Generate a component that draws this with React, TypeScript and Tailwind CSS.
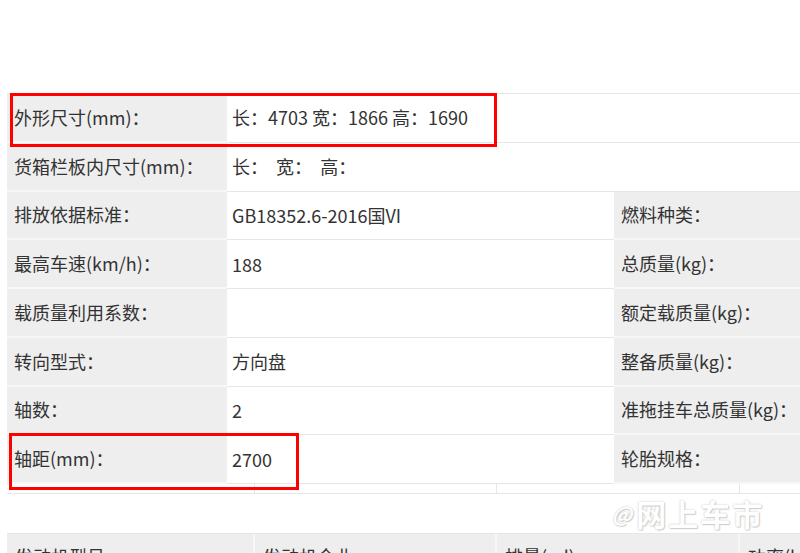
import React from 'react';

const font = { fontFamily: '"Noto Sans CJK SC", "Noto Sans", sans-serif' };

type Row = { label: string; value: string; label2?: string };

const rows: Row[] = [
  { label: '外形尺寸(mm)：', value: '长：4703 宽：1866 高：1690' },
  { label: '货箱栏板内尺寸(mm)：', value: '长：  宽：  高：' },
  { label: '排放依据标准：', value: 'GB18352.6-2016国VI', label2: '燃料种类：' },
  { label: '最高车速(km/h)：', value: '188', label2: '总质量(kg)：' },
  { label: '载质量利用系数：', value: '', label2: '额定载质量(kg)：' },
  { label: '转向型式：', value: '方向盘', label2: '整备质量(kg)：' },
  { label: '轴数：', value: '2', label2: '准拖挂车总质量(kg)：' },
  { label: '轴距(mm)：', value: '2700', label2: '轮胎规格：' },
];

const SpecRow = ({ row }: { row: Row }) => {
  return (
    <div className="flex h-[48.75px]">
      <div className="w-[220px] shrink-0 flex items-center pl-[7px] bg-[#eeeeee] border-b-2 border-[#f7f7f7] whitespace-nowrap">
        {row.label}
      </div>
      {row.label2 !== undefined ? (
        <>
          <div className="w-[387px] shrink-0 flex items-center pl-[5px] bg-white border-b border-[#e6e6e6] whitespace-pre">
            {row.value}
          </div>
          <div className="flex-1 flex items-center pl-[7px] bg-[#eeeeee] border-b-2 border-[#f7f7f7] whitespace-nowrap">
            {row.label2}
          </div>
        </>
      ) : (
        <div className="flex-1 flex items-center pl-[5px] bg-white border-b border-[#e6e6e6] whitespace-pre">
          {row.value}
        </div>
      )}
    </div>
  );
};

const App = () => {
  return (
    <div className="relative w-[800px] h-[553px] overflow-hidden bg-white text-[18px] text-[#333333]" style={font}>
      <div className="pt-[93px] pl-[7px]">
        <div className="border-t border-[#e6e6e6]">
          {rows.map((r) => (
            <SpecRow key={r.label} row={r} />
          ))}
        </div>

        {/* thin empty row under the table */}
        <div className="flex h-[10px] border-b border-[#e6e6e6]">
          <div className="w-[248px] shrink-0 border-r border-[#e6e6e6]" />
          <div className="w-[242px] shrink-0 border-r border-[#e6e6e6]" />
          <div className="w-[243px] shrink-0 border-r border-[#e6e6e6]" />
          <div className="flex-1" />
        </div>

        <div className="mt-[39px] flex h-[49px] bg-[#eeeeee] border-t border-[#e6e6e6] whitespace-nowrap">
          <div className="w-[248px] shrink-0 pl-[8px] pt-[9px] border-r-2 border-[#f7f7f7]">发动机型号</div>
          <div className="w-[242px] shrink-0 pl-[8px] pt-[9px] border-r-2 border-[#f7f7f7]">发动机企业</div>
          <div className="w-[243px] shrink-0 pl-[8px] pt-[9px] border-r-2 border-[#f7f7f7]">排量(ml)</div>
          <div className="flex-1 pl-[8px] pt-[9px]">功率(kw)</div>
        </div>
      </div>

      {/* red highlight boxes */}
      <div className="absolute left-[10px] top-[93px] w-[487px] h-[54px] border-[3px] border-[#ff0000]" />
      <div className="absolute left-[9px] top-[433px] w-[290px] h-[57px] border-[3px] border-[#ff0000]" />

      {/* watermark */}
      <div
        className="absolute left-[612px] top-[491px] flex items-center gap-[4px] text-white font-bold whitespace-nowrap opacity-90"
        style={{ textShadow: '0 0 2px #bbbbbb, 1px 1px 1px #cccccc' }}
      >
        <span className="text-[20px] italic">@</span>
        <span className="text-[30px] tracking-[2px]">网上车市</span>
      </div>
    </div>
  );
};

export default App;
